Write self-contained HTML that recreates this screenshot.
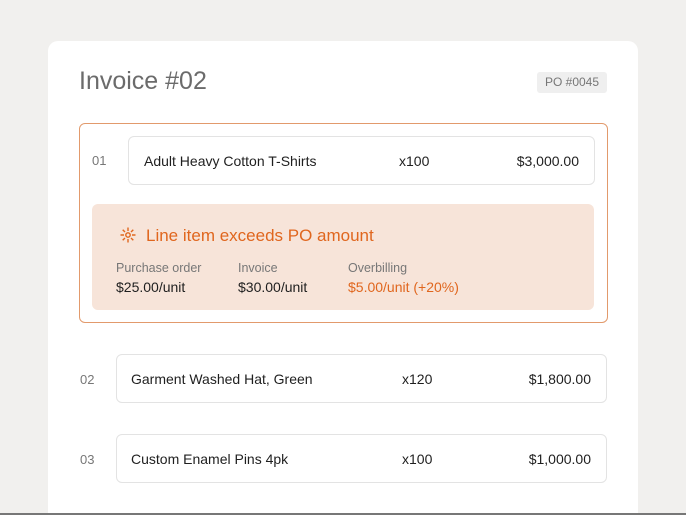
<!DOCTYPE html>
<html><head><style>
*{margin:0;padding:0;box-sizing:border-box}
html,body{width:686px;height:515px;overflow:hidden}
body{background:#f1f0ee;font-family:"Liberation Sans",sans-serif;position:relative;color:#1f1f1f}
.card{position:absolute;left:48px;top:41px;width:590px;height:472px;background:#fff;border-radius:10px 10px 0 0}
.title{position:absolute;left:79px;top:67px;font-size:25px;color:#6b6b6b}
.po{position:absolute;left:537px;top:72px;width:70px;height:21px;background:#efefef;border-radius:3px;font-size:12px;color:#777;text-align:center;line-height:21px}
.ob{position:absolute;left:79px;top:123px;width:529px;height:200px;border:1px solid #e29a6c;border-radius:6px}
.row{position:absolute;height:49px;border:1px solid #e3e3e3;border-radius:6px;font-size:14px;background:#fff}
.row span{position:absolute;top:16px}
.num{position:absolute;font-size:13px;color:#777}
.alert{position:absolute;left:92px;top:204px;width:502px;height:106px;background:#f7e4d9;border-radius:6px}
.at{position:absolute;left:54px;top:22px;font-size:17px;color:#e0661e}
.lbl{position:absolute;top:57px;font-size:12.5px;color:#777}
.val{position:absolute;top:75px;font-size:14px;color:#1f1f1f}
.bot{position:absolute;left:0;top:513px;width:686px;height:2px;background:#777}
</style></head><body>
<div class="card"></div>
<div class="title">Invoice #02</div>
<div class="po">PO #0045</div>
<div class="ob"></div>
<div class="num" style="left:92px;top:153px">01</div>
<div class="row" style="left:128px;top:136px;width:467px"><span style="left:15px">Adult Heavy Cotton T-Shirts</span><span style="left:270px">x100</span><span style="right:15px">$3,000.00</span></div>
<div class="alert">
<svg style="position:absolute;left:28px;top:23px" width="16" height="16" viewBox="0 0 16 16" stroke="#e0661e" stroke-width="1.4" fill="none"><circle cx="8" cy="8" r="2.2"/><path d="M8 0.5v3.5M8 12v3.5M0.5 8h3.5M12 8h3.5M2.7 2.7l2.3 2.3M11 11l2.3 2.3M13.3 2.7l-2.3 2.3M5 11l-2.3 2.3"/></svg>
<div class="at">Line item exceeds PO amount</div>
<div class="lbl" style="left:24px">Purchase order</div><div class="val" style="left:24px">$25.00/unit</div>
<div class="lbl" style="left:146px">Invoice</div><div class="val" style="left:146px">$30.00/unit</div>
<div class="lbl" style="left:256px">Overbilling</div><div class="val" style="left:256px;color:#e0661e">$5.00/unit (+20%)</div>
</div>
<div class="num" style="left:80px;top:372px">02</div>
<div class="row" style="left:116px;top:354px;width:491px"><span style="left:14px">Garment Washed Hat, Green</span><span style="left:285px">x120</span><span style="right:15px">$1,800.00</span></div>
<div class="num" style="left:80px;top:452px">03</div>
<div class="row" style="left:116px;top:434px;width:491px"><span style="left:14px">Custom Enamel Pins 4pk</span><span style="left:285px">x100</span><span style="right:15px">$1,000.00</span></div>
<div class="bot"></div>
</body></html>
